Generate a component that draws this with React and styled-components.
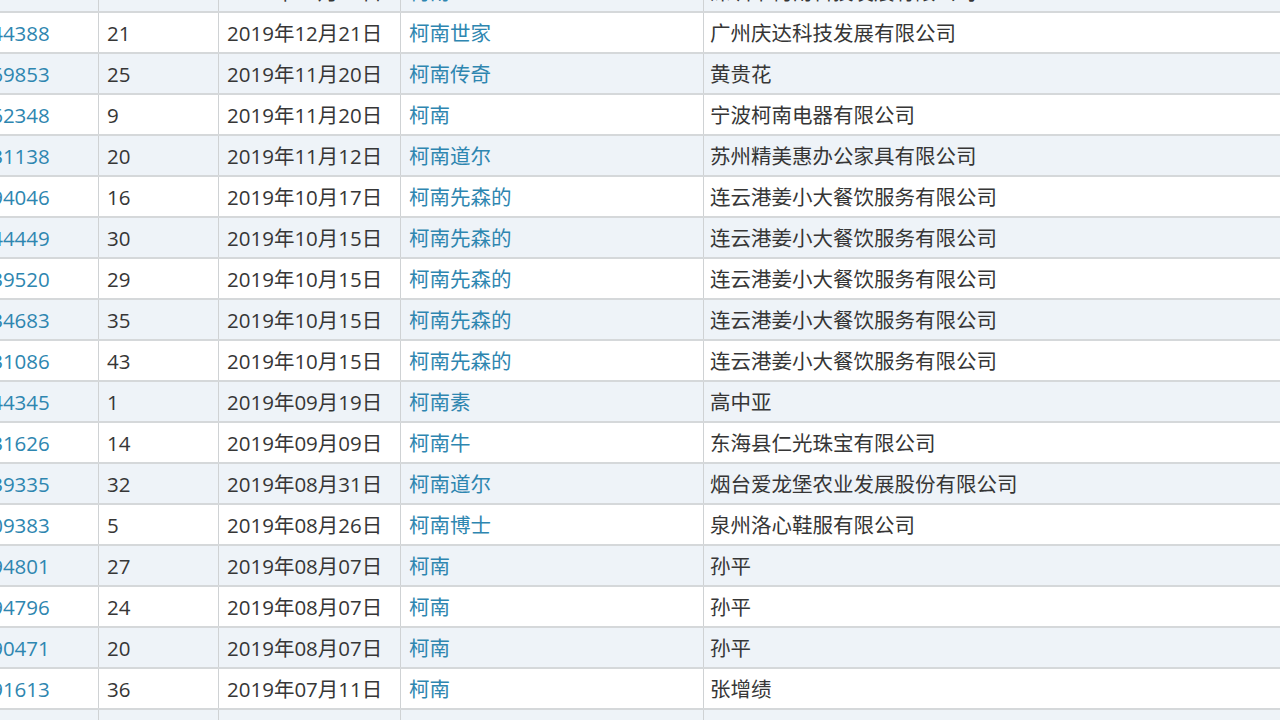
import React from "react";
import styled, { createGlobalStyle } from "styled-components";

const Global = createGlobalStyle`
  html, body { margin: 0; padding: 0; background: #ffffff; }
  body { font-family: "Open Sans", "Noto Sans CJK SC", sans-serif; }
`;

const Viewport = styled.div`
  width: 1280px;
  height: 720px;
  overflow: hidden;
  background: #ffffff;
`;

const Table = styled.div`
  margin-top: -28px;
  margin-left: -52px;
  width: 1345px;
  display: flex;
  flex-direction: column;
`;

const Row = styled.div`
  display: grid;
  grid-template-columns: 151px 120px 182px 303px 1fr;
  height: 41px;
  box-sizing: border-box;
  border-bottom: 2px solid #d5d8da;
  background: ${(p) => (p.$striped ? "#eef3f8" : "#ffffff")};
`;

const Cell = styled.div`
  box-sizing: border-box;
  padding: 2px ${(p) => (p.$tight ? "6px" : "8px")} 0;
  border-right: 1px solid #cfd2d4;
  display: flex;
  align-items: center;
  font-family: "Open Sans", "Noto Sans CJK SC", sans-serif;
  font-size: 20.5px;
  line-height: 1;
  white-space: nowrap;
  overflow: hidden;
  color: ${(p) => (p.$link ? "#2e86b0" : "#363636")};
`;

const rows = [
  ["40944510", "35", "2019年12月30日", "柯南", "深圳市柯南科技发展有限公司"],
  ["40944388", "21", "2019年12月21日", "柯南世家", "广州庆达科技发展有限公司"],
  ["42369853", "25", "2019年11月20日", "柯南传奇", "黄贵花"],
  ["42362348", "9", "2019年11月20日", "柯南", "宁波柯南电器有限公司"],
  ["42231138", "20", "2019年11月12日", "柯南道尔", "苏州精美惠办公家具有限公司"],
  ["41894046", "16", "2019年10月17日", "柯南先森的", "连云港姜小大餐饮服务有限公司"],
  ["41844449", "30", "2019年10月15日", "柯南先森的", "连云港姜小大餐饮服务有限公司"],
  ["41839520", "29", "2019年10月15日", "柯南先森的", "连云港姜小大餐饮服务有限公司"],
  ["41834683", "35", "2019年10月15日", "柯南先森的", "连云港姜小大餐饮服务有限公司"],
  ["41831086", "43", "2019年10月15日", "柯南先森的", "连云港姜小大餐饮服务有限公司"],
  ["41444345", "1", "2019年09月19日", "柯南素", "高中亚"],
  ["41231626", "14", "2019年09月09日", "柯南牛", "东海县仁光珠宝有限公司"],
  ["40939335", "32", "2019年08月31日", "柯南道尔", "烟台爱龙堡农业发展股份有限公司"],
  ["40809383", "5", "2019年08月26日", "柯南博士", "泉州洛心鞋服有限公司"],
  ["40394801", "27", "2019年08月07日", "柯南", "孙平"],
  ["40394796", "24", "2019年08月07日", "柯南", "孙平"],
  ["40390471", "20", "2019年08月07日", "柯南", "孙平"],
  ["39891613", "36", "2019年07月11日", "柯南", "张增绩"],
  ["39765412", "25", "2019年06月28日", "柯南侦探", "杭州柯南文化创意有限公司"],
];

export default function App() {
  return (
    <>
      <Global />
      <Viewport>
        <Table>
          {rows.map((r, i) => (
            <Row key={i} $striped={i % 2 === 0}>
              <Cell $link>{r[0]}</Cell>
              <Cell>{r[1]}</Cell>
              <Cell>{r[2]}</Cell>
              <Cell $link>{r[3]}</Cell>
              <Cell $tight>{r[4]}</Cell>
            </Row>
          ))}
        </Table>
      </Viewport>
    </>
  );
}
